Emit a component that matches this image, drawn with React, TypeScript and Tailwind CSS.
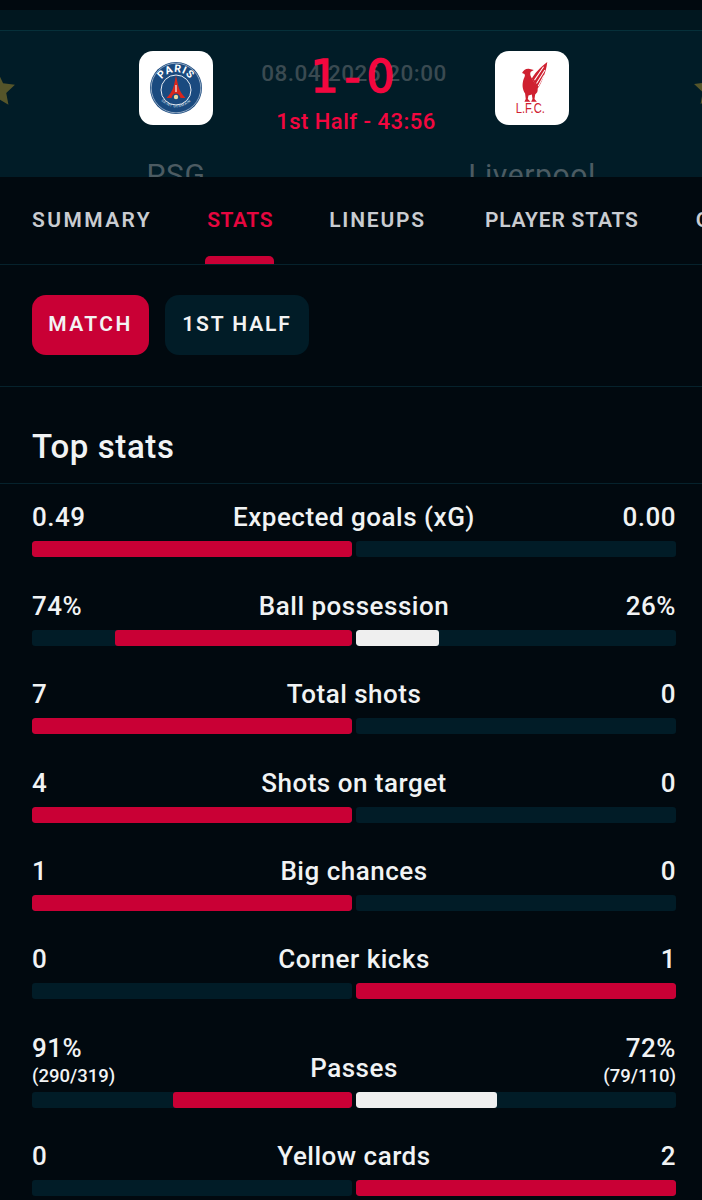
type Stat = {
  label: string
  left: string
  right: string
  leftSub?: string
  rightSub?: string
  leftPct: number
  rightPct: number
  rightColor?: 'red' | 'white'
}

const stats: Stat[] = [
  { label: 'Expected goals (xG)', left: '0.49', right: '0.00', leftPct: 100, rightPct: 0 },
  { label: 'Ball possession', left: '74%', right: '26%', leftPct: 74, rightPct: 26, rightColor: 'white' },
  { label: 'Total shots', left: '7', right: '0', leftPct: 100, rightPct: 0 },
  { label: 'Shots on target', left: '4', right: '0', leftPct: 100, rightPct: 0 },
  { label: 'Big chances', left: '1', right: '0', leftPct: 100, rightPct: 0 },
  { label: 'Corner kicks', left: '0', right: '1', leftPct: 0, rightPct: 100, rightColor: 'red' },
  { label: 'Passes', left: '91%', right: '72%', leftSub: '(290/319)', rightSub: '(79/110)', leftPct: 56, rightPct: 44, rightColor: 'white' },
  { label: 'Yellow cards', left: '0', right: '2', leftPct: 0, rightPct: 100, rightColor: 'red' },
]

const tabs = [
  { name: 'SUMMARY', cls: 'mr-[55px] tracking-[2.4px] text-[#c9ccd1]' },
  { name: 'STATS', cls: 'mr-[56px] tracking-[0.6px] text-[#e6063f]' },
  { name: 'LINEUPS', cls: 'mr-[59px] tracking-[1.8px] text-[#c9ccd1]' },
  { name: 'PLAYER STATS', cls: 'mr-[57px] tracking-[0.8px] text-[#c9ccd1]' },
  { name: 'ODDS', cls: 'tracking-[1px] text-[#c9ccd1]' },
]

function Star({ className }: { className: string }) {
  return (
    <svg viewBox="0 0 24 24" className={className} fill="#55552a">
      <path d="M12 1.5l3.2 6.9 7.5.9-5.5 5.2 1.4 7.5L12 18l-6.6 3.5 1.4-7.5-5.5-5.2 7.5-.9z" />
    </svg>
  )
}

function PsgLogo() {
  return (
    <svg viewBox="0 0 52 52" className="w-[52px] h-[52px]">
      <circle cx="26" cy="26" r="26" fill="#1a4a7f" />
      <circle cx="26" cy="26" r="24.8" fill="none" stroke="#dfe6ee" strokeWidth="0.6" />
      <circle cx="26" cy="28" r="15" fill="#1a4a7f" stroke="#e8edf3" strokeWidth="1" />
      <path id="psg-arc" d="M9 27 A17 17 0 0 1 43 27" fill="none" />
      <text fontFamily="Roboto, sans-serif" fontSize="10.500" fontWeight="700" fill="#ffffff" letterSpacing="0.800">
        <textPath href="#psg-arc" startOffset="50%" textAnchor="middle">PARIS</textPath>
      </text>
      <path d="M26 13.500 L28 23 C29.500 29 32.500 33 35.500 36 L30.500 36 C29.800 33 28.200 31.500 26 31.500 C23.800 31.500 22.200 33 21.500 36 L16.500 36 C19.500 33 22.500 29 24 23 Z" fill="#d9261c" />
      <path d="M26 23 L26 30" stroke="#f4f4f4" strokeWidth="1.200" />
      <circle cx="26" cy="35" r="2.200" fill="#e8d9a0" />
      <path id="psg-low" d="M8.500 35 A20 20 0 0 0 43.500 35" fill="none" />
      <text fontFamily="Roboto, sans-serif" fontSize="3.600" fill="#d7e0ea" letterSpacing="0.500">
        <textPath href="#psg-low" startOffset="50%" textAnchor="middle">SAINT GERMAIN</textPath>
      </text>
    </svg>
  )
}

function LfcLogo() {
  return (
    <div className="flex flex-col items-center">
      <svg viewBox="120 65 80 125" className="w-[27px] h-[42px] ml-[5px]" fill="#cf2030">
        <path d="M123 101 C126 93 134 87 143 88 L158 92 L149 97 C146 101 147 108 151 115 L160 130 C168 140 172 150 168 158 L162 165 L160 178 L167 186 L150 186 L154 178 L152 165 L142 168 L140 178 L148 186 L130 186 L134 178 L132 162 C124 150 122 135 128 118 C131 112 133 108 130 104 Z" />
        <path d="M152 118 C158 105 175 85 198 68 C196 85 192 100 188 108 C182 125 176 140 168 148 C163 135 157 126 152 118 Z" />
        <path d="M160 122 L187 82 M166 132 L191 92 M171 140 L188 108" stroke="#ffffff" strokeWidth="3" fill="none" />
      </svg>
      <span className="font-['Liberation_Sans',sans-serif] text-[14px] leading-[13px] text-[#cf2030] mt-[-1px] mr-[3px] scale-x-[0.8]">L.F.C.</span>
    </div>
  )
}

function Bar({ stat }: { stat: Stat }) {
  return (
    <div className="flex gap-1 mt-[9px]">
      <div className="flex-1 h-4 rounded-[3px] bg-[#011c27] flex justify-end overflow-hidden">
        <div className="h-full rounded-[3px] bg-[#c90035]" style={{ width: `${stat.leftPct}%` }} />
      </div>
      <div className="flex-1 h-4 rounded-[3px] bg-[#011c27] overflow-hidden">
        <div
          className={stat.rightColor === 'white' ? 'h-full rounded-[3px] bg-[#efefef]' : 'h-full rounded-[3px] bg-[#c90035]'}
          style={{ width: `${stat.rightPct}%` }}
        />
      </div>
    </div>
  )
}

function StatRow({ stat }: { stat: Stat }) {
  return (
    <div className="mb-[33.4px]">
      <div className="flex items-end justify-between text-[#f1f3f4] font-medium text-[26px] leading-[30px] tracking-[0.5px]">
        <div className="w-[120px]">
          <div>{stat.left}</div>
          {stat.leftSub && <div className="h-[20px] text-[18.500px] leading-[26px] tracking-normal">{stat.leftSub}</div>}
        </div>
        <div>{stat.label}</div>
        <div className="w-[120px] text-right">
          <div>{stat.right}</div>
          {stat.rightSub && <div className="h-[20px] text-[18.500px] leading-[26px] tracking-normal">{stat.rightSub}</div>}
        </div>
      </div>
      <Bar stat={stat} />
    </div>
  )
}

export default function App() {
  return (
    <div className="w-[702px] h-[1200px] overflow-hidden bg-[#01090f] font-['Roboto',sans-serif]">
      {/* match header */}
      <div className="h-[177px] pt-[10px]">
        <div className="h-[167px] bg-[#011c27] overflow-hidden relative">
          <div className="h-[21px] bg-[#01171f] border-b border-[#06303a]" />
          <Star className="absolute left-[-21px] top-[60px] w-[38px] h-[38px]" />
          <Star className="absolute left-[692px] top-[60px] w-[38px] h-[38px]" />
          <div className="flex justify-center gap-[282px] pt-[20px] pl-[6px]">
            {[0, 1].map((i) => (
              <div key={i} className="flex flex-col items-center w-[74px]">
                <div className="w-[74px] h-[74px] rounded-[14px] bg-white flex items-center justify-center">
                  {i === 0 ? <PsgLogo /> : <LfcLogo />}
                </div>
                <div className="mt-[33px] whitespace-nowrap text-[30px] leading-[34px] tracking-[0.6px] text-[#4c5b62]">
                  {i === 0 ? 'PSG' : 'Liverpool'}
                </div>
              </div>
            ))}
          </div>
          {/* score sits on top of the kick-off time */}
          <div className="absolute left-[6px] right-0 top-[50px] text-center text-[22.500px] leading-[26px] font-medium text-[#3a4a51] tracking-[0.5px]">
            08.04.2026 20:00
          </div>
          <div className="absolute left-[9px] right-0 top-[41px] text-center font-['DejaVu_Sans',sans-serif] text-[44px] leading-[52px] tracking-[6px] text-[#f2073f] [-webkit-text-stroke:1.5px_#f2073f]">
            1-0
          </div>
          <div className="absolute left-[10px] right-0 top-[99px] text-center text-[22px] leading-[26px] font-medium text-[#f2073f] tracking-[0.5px]">
            1st Half - 43:56
          </div>
        </div>
      </div>

      {/* tabs */}
      <div className="h-[88px] border-b border-[#06222c] flex pl-[32px] overflow-hidden">
        {tabs.map((t) => (
          <div key={t.name} className={`relative shrink-0 pt-[29px] whitespace-nowrap text-[21px] leading-[28px] font-semibold ${t.cls}`}>
            {t.name}
            {t.name === 'STATS' && <div className="absolute left-[-2px] right-[-1px] bottom-0 h-[8px] rounded-t-[5px] bg-[#c90035]" />}
          </div>
        ))}
      </div>

      {/* period filter */}
      <div className="h-[122px] border-b border-[#06222c] flex gap-4 pl-[32px] pt-[30px]">
        <div className="w-[117px] h-[60px] rounded-[14px] bg-[#c90035] flex items-center justify-center text-[#f3f3f3] text-[21px] font-semibold tracking-[2.4px]">MATCH</div>
        <div className="w-[144px] h-[60px] rounded-[14px] bg-[#011c27] flex items-center justify-center text-[#f3f3f3] text-[21px] font-semibold tracking-[1.9px]">1ST HALF</div>
      </div>

      {/* top stats */}
      <div className="h-[97px] border-b border-[#06222c] pl-[32px] pt-[41px] text-[33px] leading-[38px] font-medium tracking-[0.6px] text-[#f1f3f4]">
        Top stats
      </div>
      <div className="pl-[32px] pr-[26px] pt-[18.400px]">
        {stats.map((s) => (
          <StatRow key={s.label} stat={s} />
        ))}
      </div>
    </div>
  )
}
